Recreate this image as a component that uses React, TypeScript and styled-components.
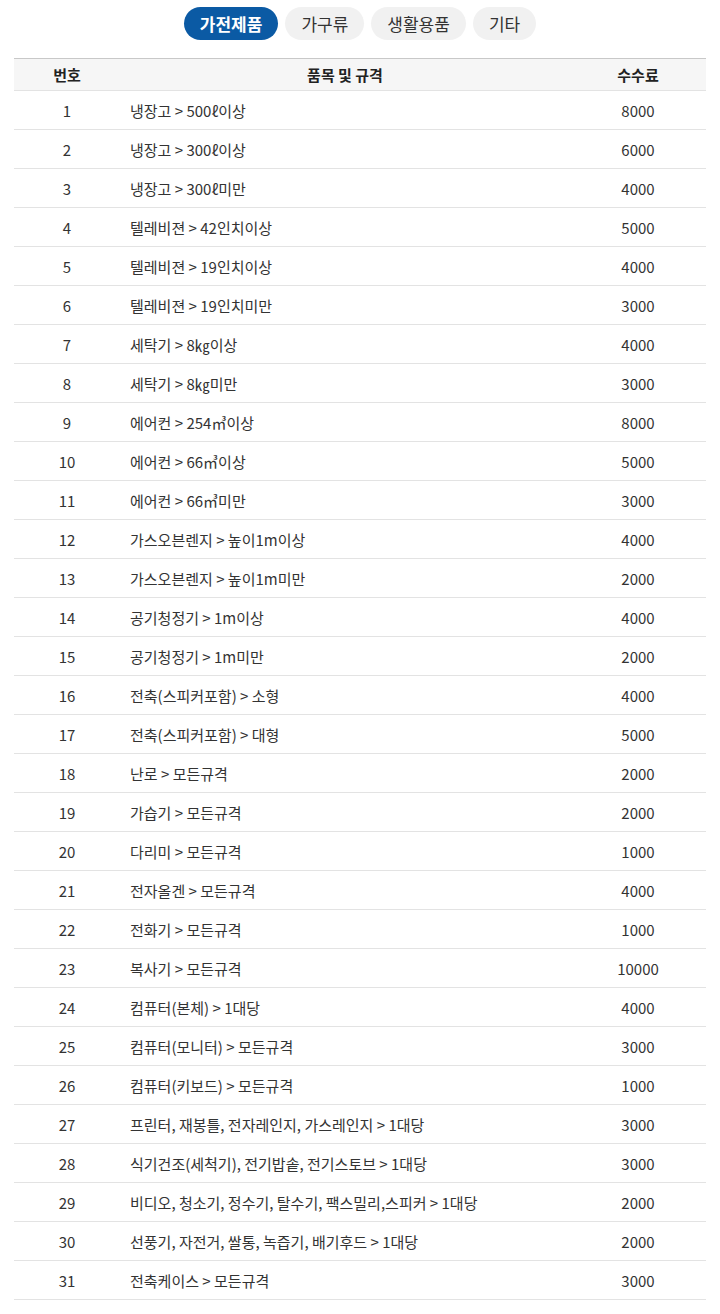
import React from "react";
import styled, { createGlobalStyle } from "styled-components";

const GlobalStyle = createGlobalStyle`
  html, body { margin: 0; padding: 0; background: #fff; }
  body {
    font-family: "Noto Sans CJK KR", "Noto Sans", sans-serif;
    color: #333;
  }
`;

const Page = styled.div`
  padding: 7px 14px 14px;
`;

const Tabs = styled.nav`
  display: flex;
  justify-content: center;
  gap: 7px;
  margin-bottom: 18px;
`;

const Tab = styled.button<{ $active?: boolean }>`
  font-family: inherit;
  height: 33px;
  padding: 0 16px;
  border: none;
  border-radius: 17px;
  font-size: 17px;
  font-weight: ${(p) => (p.$active ? 700 : 400)};
  letter-spacing: 0;
  color: ${(p) => (p.$active ? "#fff" : "#333")};
  background: ${(p) => (p.$active ? "#0b5aa4" : "#f1f1f1")};
  cursor: pointer;
`;

const Table = styled.table`
  width: 100%;
  border-collapse: collapse;
  border-top: 1px solid #c8c8c8;
  table-layout: fixed;
`;

const HeadCell = styled.th<{ $w?: number }>`
  width: ${(p) => (p.$w ? `${p.$w}px` : "auto")};
  height: 31px;
  padding: 0;
  background: #f6f6f6;
  font-size: 15px;
  font-weight: 700;
  color: #222;
  text-align: center;
  border-bottom: 1px solid #e3e3e3;
`;

const Row = styled.tr`
  border-bottom: 1px solid #e3e3e3;
`;

const Cell = styled.td<{ $align?: "left" | "center" }>`
  height: 38px;
  padding: 0 ${(p) => (p.$align === "left" ? "10px" : "0")};
  font-size: 15px;
  letter-spacing: 0;
  color: #333;
  text-align: ${(p) => p.$align ?? "center"};
  white-space: nowrap;
`;

const rows: [string, string][] = [
  ["냉장고 > 500ℓ이상", "8000"],
  ["냉장고 > 300ℓ이상", "6000"],
  ["냉장고 > 300ℓ미만", "4000"],
  ["텔레비젼 > 42인치이상", "5000"],
  ["텔레비젼 > 19인치이상", "4000"],
  ["텔레비젼 > 19인치미만", "3000"],
  ["세탁기 > 8㎏이상", "4000"],
  ["세탁기 > 8㎏미만", "3000"],
  ["에어컨 > 254㎥이상", "8000"],
  ["에어컨 > 66㎥이상", "5000"],
  ["에어컨 > 66㎥미만", "3000"],
  ["가스오븐렌지 > 높이1m이상", "4000"],
  ["가스오븐렌지 > 높이1m미만", "2000"],
  ["공기청정기 > 1m이상", "4000"],
  ["공기청정기 > 1m미만", "2000"],
  ["전축(스피커포함) > 소형", "4000"],
  ["전축(스피커포함) > 대형", "5000"],
  ["난로 > 모든규격", "2000"],
  ["가습기 > 모든규격", "2000"],
  ["다리미 > 모든규격", "1000"],
  ["전자올겐 > 모든규격", "4000"],
  ["전화기 > 모든규격", "1000"],
  ["복사기 > 모든규격", "10000"],
  ["컴퓨터(본체) > 1대당", "4000"],
  ["컴퓨터(모니터) > 모든규격", "3000"],
  ["컴퓨터(키보드) > 모든규격", "1000"],
  ["프린터, 재봉틀, 전자레인지, 가스레인지 > 1대당", "3000"],
  ["식기건조(세척기), 전기밥솥, 전기스토브 > 1대당", "3000"],
  ["비디오, 청소기, 정수기, 탈수기, 팩스밀리,스피커 > 1대당", "2000"],
  ["선풍기, 자전거, 쌀통, 녹즙기, 배기후드 > 1대당", "2000"],
  ["전축케이스 > 모든규격", "3000"],
];

const tabs = ["가전제품", "가구류", "생활용품", "기타"];

export default function App() {
  return (
    <>
      <GlobalStyle />
      <Page>
        <Tabs>
          {tabs.map((t, i) => (
            <Tab key={t} $active={i === 0}>
              {t}
            </Tab>
          ))}
        </Tabs>
        <Table>
          <thead>
            <tr>
              <HeadCell $w={106}>번호</HeadCell>
              <HeadCell>품목 및 규격</HeadCell>
              <HeadCell $w={136}>수수료</HeadCell>
            </tr>
          </thead>
          <tbody>
            {rows.map(([item, fee], i) => (
              <Row key={i}>
                <Cell>{i + 1}</Cell>
                <Cell $align="left">{item}</Cell>
                <Cell>{fee}</Cell>
              </Row>
            ))}
          </tbody>
        </Table>
      </Page>
    </>
  );
}
